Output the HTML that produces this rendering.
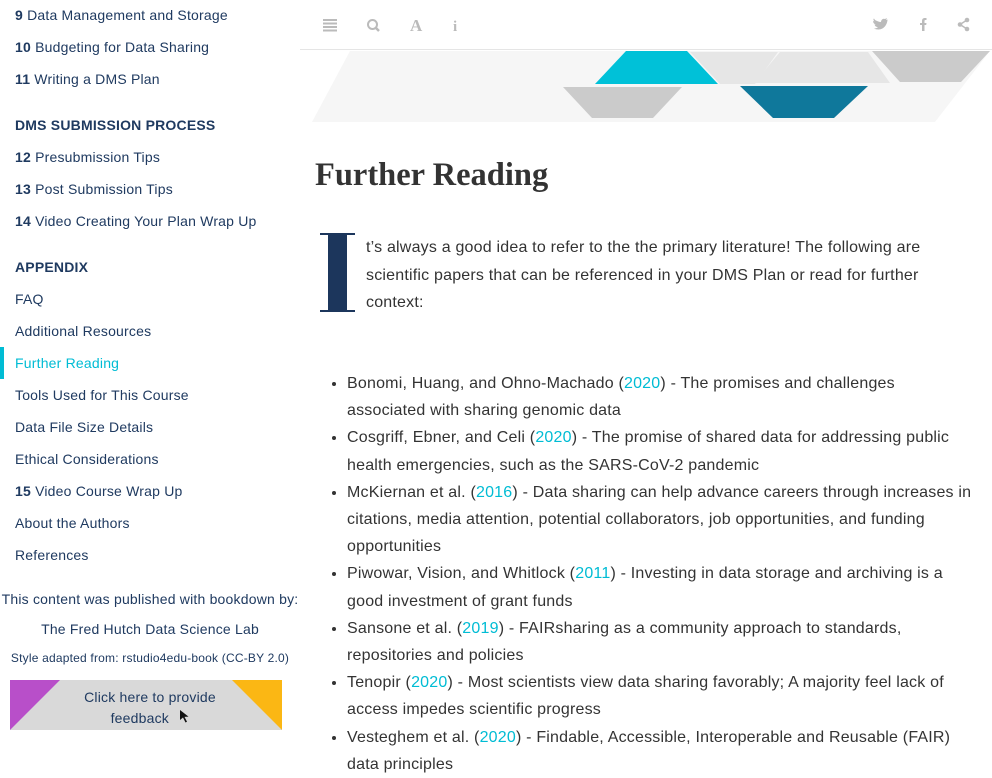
<!DOCTYPE html>
<html><head><meta charset="utf-8"><style>
*{margin:0;padding:0;box-sizing:border-box}
body{width:992px;height:744px;overflow:hidden;background:#fff;font-family:"Liberation Sans",sans-serif;position:relative;letter-spacing:0.2px}
.sb{position:absolute;left:0;top:0;width:300px;height:744px;background:#fff;color:#1f3a60;font-size:14px}
.sb .it{position:absolute;left:15px;line-height:18px;white-space:nowrap}
.sb .it b{font-weight:bold}
.sb .hd{font-weight:bold;font-size:14px}
.sb .act{color:#00bcd4}
.bar{position:absolute;left:0;top:347px;width:4px;height:32px;background:#00bcd4}
.ctr{position:absolute;left:0;width:300px;text-align:center;white-space:nowrap}
.main{position:absolute;left:300px;top:0;width:692px;height:744px;color:#333}
.tb{position:absolute;left:0;top:0;width:692px;height:50px;border-bottom:1px solid #e5e5e5}
h1{position:absolute;left:15px;top:157px;font-family:"Liberation Serif",serif;font-size:32.5px;font-weight:bold;color:#333;white-space:nowrap;letter-spacing:0}
.p{position:absolute;left:66px;top:234px;width:602px;font-size:16px;line-height:27.5px}
.cap{position:absolute;left:20px;top:233px;width:35px;height:79px}
ul{position:absolute;left:47px;top:370px;width:628px;font-size:16px;line-height:27.2px;list-style:disc}
a{color:#00bcd4;text-decoration:none}
</style></head><body>
<div class="sb">
<div class="it" style="top:6px"><b>9</b> Data Management and Storage</div>
<div class="it" style="top:38px"><b>10</b> Budgeting for Data Sharing</div>
<div class="it" style="top:70px"><b>11</b> Writing a DMS Plan</div>
<div class="it hd" style="top:116px">DMS SUBMISSION PROCESS</div>
<div class="it" style="top:148px"><b>12</b> Presubmission Tips</div>
<div class="it" style="top:180px"><b>13</b> Post Submission Tips</div>
<div class="it" style="top:212px"><b>14</b> Video Creating Your Plan Wrap Up</div>
<div class="it hd" style="top:258px">APPENDIX</div>
<div class="it" style="top:290px">FAQ</div>
<div class="it" style="top:322px">Additional Resources</div>
<div class="bar"></div>
<div class="it act" style="top:354px">Further Reading</div>
<div class="it" style="top:386px">Tools Used for This Course</div>
<div class="it" style="top:418px">Data File Size Details</div>
<div class="it" style="top:450px">Ethical Considerations</div>
<div class="it" style="top:482px"><b>15</b> Video Course Wrap Up</div>
<div class="it" style="top:514px">About the Authors</div>
<div class="it" style="top:546px">References</div>
<div class="ctr" style="top:591px">This content was published with bookdown by:</div>
<div class="ctr" style="top:621px">The Fred Hutch Data Science Lab</div>
<div class="ctr" style="top:651px;font-size:12px">Style adapted from: rstudio4edu-book (CC-BY 2.0)</div>
<div style="position:absolute;left:10px;top:680px;width:272px;height:50px;background:#d9d9d9;overflow:hidden">
<svg width="272" height="50" style="position:absolute;left:0;top:0"><polygon points="0,0 50,0 0,50" fill="#b84fc9"/><polygon points="222,0 272,0 272,50" fill="#fbb714"/>
<path d="M170,30 l0,10 l3,-2.5 l2.5,5 l1.5,-0.8 l-2.5,-4.8 l4,-0.3 z" fill="#111"/></svg>
<div style="position:absolute;left:0;top:7px;width:280px;text-align:center;line-height:21px;font-size:14px">Click here to provide<br>feedback&nbsp;&nbsp;&nbsp;&nbsp;&nbsp;</div>
</div>
</div>
<div class="main">
<div class="tb">
<svg width="692" height="50">
<g fill="#bbb">
<rect x="23" y="19" width="14" height="2"/><rect x="23" y="22.5" width="14" height="2"/><rect x="23" y="26" width="14" height="2"/><rect x="23" y="29.5" width="14" height="2"/>
<circle cx="72.5" cy="24.5" r="4.5" fill="none" stroke="#bbb" stroke-width="2"/><path d="M75.5,27.5 l3.5,3.5" stroke="#bbb" stroke-width="2.5"/>
<text x="110" y="31" font-family="Liberation Serif" font-size="17" font-weight="bold" fill="#bbb">A</text>
<text x="153" y="31" font-family="Liberation Serif" font-size="15" font-weight="bold" fill="#bbb">i</text>
<path d="M575,20 c2,1 4,2 6,2 c0-2 2-4 4-3 l2-1 l-1 2 l1.5-.5 c0 4-3 10-9 10 c-2 0-3.5-.5-4.5-1 c2 0 3-.5 4-1.5 c-2 0-3-1-3.5-2.5 l1.5 0 c-2-.5-3-2-3-3.5 l1.5.5 c-1-1-1.5-2.5-.5-3 z"/>
<path d="M622,31 l0,-6 l-2,0 l0,-2 l2,0 l0,-2 c0,-2 1,-3 3,-3 l1.5,0 l0,2 l-1,0 c-1,0 -1,.5 -1,1.2 l0,1.8 l2,0 l-.3,2 l-1.7,0 l0,6 z"/>
<circle cx="667" cy="20" r="2.3"/><circle cx="660" cy="24.5" r="2.3"/><circle cx="667" cy="29" r="2.3"/>
<path d="M660,24.5 L667,20 M660,24.5 L667,29" stroke="#bbb" stroke-width="1.5"/>
</g></svg>
</div>
<svg style="position:absolute;left:0;top:0" width="692" height="130">
<polygon points="50,51 690,51 635,122 12,122" fill="#f6f6f6"/>
<polygon points="326,51 387,51 418,84 295,84" fill="#00c1d8"/>
<polygon points="390,52 478,52 455,84 420,84" fill="#e6e6e6"/>
<polygon points="480,52 568,52 590,83 454,83" fill="#e6e6e6"/>
<polygon points="572,51 690,51 661,82 600,82" fill="#cbcbcb"/>
<polygon points="263,87 382,87 353,118 292,118" fill="#cbcbcb"/>
<polygon points="440,86 568,86 534,118 473,118" fill="#0f789b"/>
</svg>
<h1>Further Reading</h1>
<svg class="cap" viewBox="0 0 35 79"><path d="M0,0 h35 v2 h-8 v75 h8 v2 h-35 v-2 h8 v-75 h-8 z" fill="#1c365c"/></svg>
<div class="p">t’s always a good idea to refer to the the primary literature! The following are scientific papers that can be referenced in your DMS Plan or read for further context:</div>
<ul>
<li>Bonomi, Huang, and Ohno-Machado (<a>2020</a>) - The promises and challenges associated with sharing genomic data</li>
<li>Cosgriff, Ebner, and Celi (<a>2020</a>) - The promise of shared data for addressing public health emergencies, such as the SARS-CoV-2 pandemic</li>
<li>McKiernan et al. (<a>2016</a>) - Data sharing can help advance careers through increases in citations, media attention, potential collaborators, job opportunities, and funding opportunities</li>
<li>Piwowar, Vision, and Whitlock (<a>2011</a>) - Investing in data storage and archiving is a good investment of grant funds</li>
<li>Sansone et al. (<a>2019</a>) - FAIRsharing as a community approach to standards, repositories and policies</li>
<li>Tenopir (<a>2020</a>) - Most scientists view data sharing favorably; A majority feel lack of access impedes scientific progress</li>
<li>Vesteghem et al. (<a>2020</a>) - Findable, Accessible, Interoperable and Reusable (FAIR) data principles</li>
</ul>
</div>
</body></html>
